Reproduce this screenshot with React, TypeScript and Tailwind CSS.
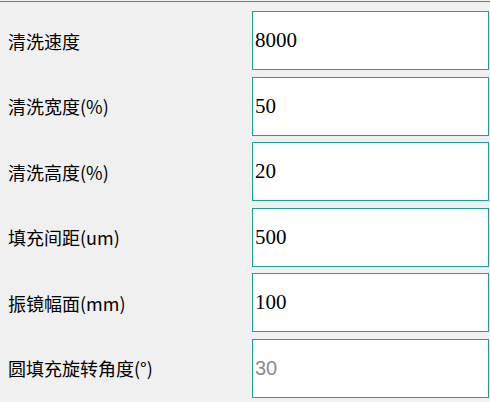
import React from 'react';

const rows: { label: string; value: string; placeholder?: boolean }[] = [
  { label: '清洗速度', value: '8000' },
  { label: '清洗宽度(%)', value: '50' },
  { label: '清洗高度(%)', value: '20' },
  { label: '填充间距(um)', value: '500' },
  { label: '振镜幅面(mm)', value: '100' },
  { label: '圆填充旋转角度(°)', value: '30', placeholder: true },
];

export default function App() {
  return (
    <div className="w-[490px] h-[402px] bg-[#f0f0f0] overflow-hidden">
      <div className="mt-[1px] border-t border-[#14a594]" />
      <div className="flex flex-col gap-[6.6px] pt-[9px]">
        {rows.map((r) => (
          <div key={r.label} className="grid grid-cols-[252px_237px] h-[59px] items-center">
            <div className="pl-[8px] text-[18px] text-black font-['Noto_Sans_CJK_SC',sans-serif] leading-none">
              {r.label}
            </div>
            <div className="h-full border border-[#14a594] bg-white flex items-center pl-[2px]">
              {r.placeholder ? (
                <span className="text-[20px] text-[#8c8c8c] font-['Liberation_Sans',sans-serif] leading-none">
                  {r.value}
                </span>
              ) : (
                <span className="text-[21px] text-black font-['Liberation_Serif',serif] leading-none">
                  {r.value}
                </span>
              )}
            </div>
          </div>
        ))}
      </div>
    </div>
  );
}
